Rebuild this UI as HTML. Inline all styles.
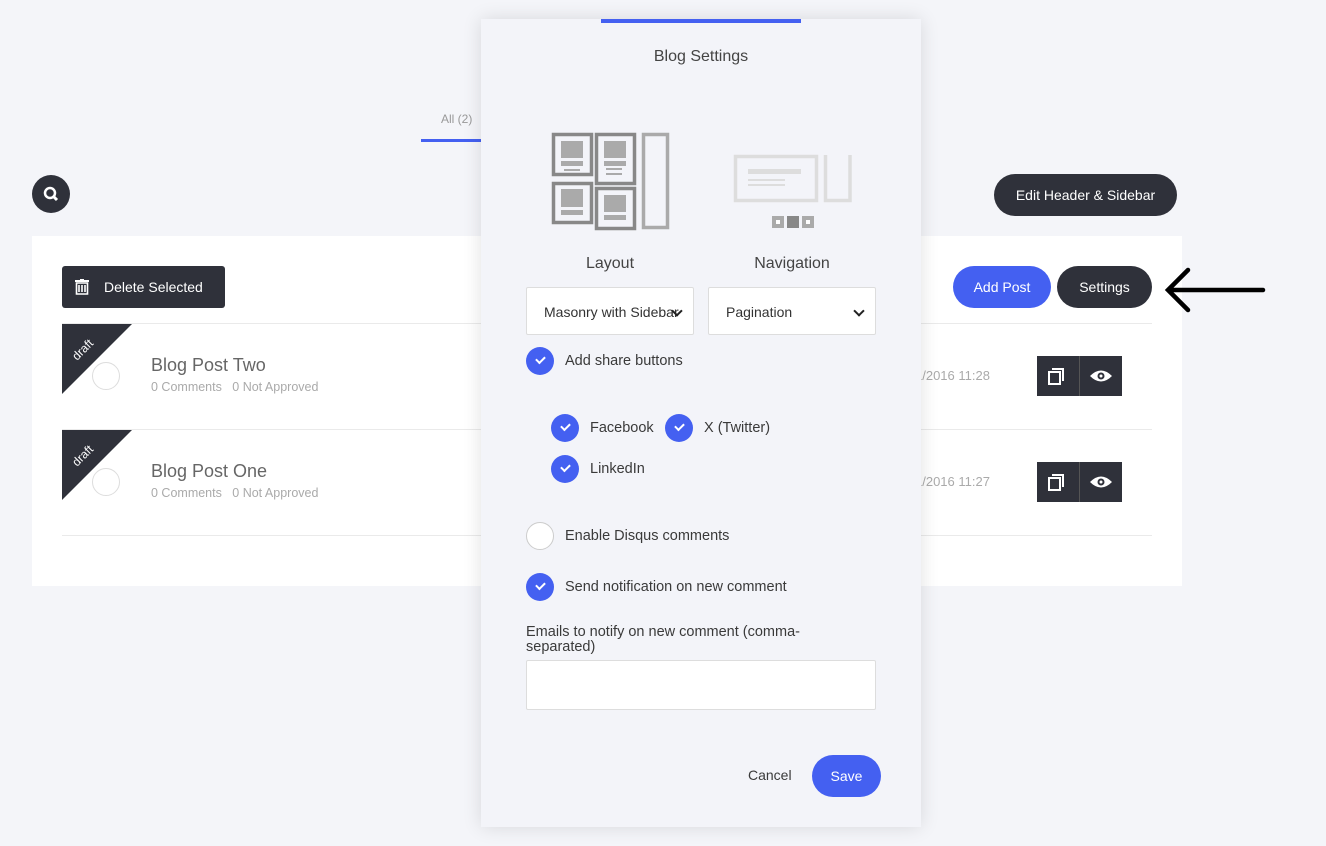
<!DOCTYPE html>
<html><head><meta charset="utf-8"><style>
*{box-sizing:border-box;margin:0;padding:0}
body{width:1326px;height:846px;background:#f4f5f9;font-family:"Liberation Sans",sans-serif;position:relative;overflow:hidden}
.a{position:absolute}
.dark{background:#2f313a;color:#fff}
.chk{position:absolute;width:28px;height:28px;border-radius:50%;background:#4460f1}
.chk:after{content:"";position:absolute;left:10px;top:9px;width:7px;height:4px;border-left:2px solid #fff;border-bottom:2px solid #fff;transform:rotate(-45deg)}
.lbl{position:absolute;font-size:15px;color:#3a3a3a}
.sel{position:absolute;height:48px;background:#fff;border:1px solid #ddd;border-radius:2px;font-size:14px;color:#333;padding:16px 0 0 17px;overflow:hidden;white-space:nowrap}
.sel:after{content:"";position:absolute;right:12px;top:19px;width:6px;height:6px;border-right:2px solid #222;border-bottom:2px solid #222;transform:rotate(45deg)}
</style></head><body>
<div class="a" style="left:441px;top:112px;font-size:12px;color:#999">All (2)</div>
<div class="a" style="left:421px;top:139px;width:62px;height:3px;background:#4460f1"></div>
<div class="a dark" style="left:32px;top:175px;width:38px;height:38px;border-radius:50%">
<svg width="38" height="38"><circle cx="18" cy="18" r="5" fill="none" stroke="#fff" stroke-width="2.5"/><line x1="21.5" y1="21.5" x2="25" y2="25" stroke="#fff" stroke-width="3"/></svg></div>
<div class="a dark" style="left:994px;top:174px;width:183px;height:42px;border-radius:21px;font-size:14px;text-align:center;line-height:42px">Edit Header &amp; Sidebar</div>
<div class="a" style="left:32px;top:236px;width:1150px;height:350px;background:#fff"></div>
<div class="a dark" style="left:62px;top:266px;width:163px;height:42px;border-radius:3px;font-size:14px;line-height:42px;padding-left:42px">Delete Selected
<svg class="a" style="left:13px;top:13px" width="14" height="16"><rect x="0" y="1" width="14" height="2" fill="#fff"/><rect x="5" y="0" width="4" height="2" fill="#fff"/><path d="M1.5 4h11v11h-11z M4 6v7 M7 6v7 M10 6v7" fill="none" stroke="#fff" stroke-width="1.6"/></svg></div>
<div class="a" style="left:953px;top:266px;width:98px;height:42px;border-radius:21px;background:#4460f1;color:#fff;font-size:14px;text-align:center;line-height:42px">Add Post</div>
<div class="a dark" style="left:1057px;top:266px;width:95px;height:42px;border-radius:21px;font-size:14px;text-align:center;line-height:42px">Settings</div>
<svg class="a" style="left:1160px;top:262px" width="110" height="56"><path d="M103 28H10 M28 8L8 28L28 48" fill="none" stroke="#000" stroke-width="4.5" stroke-linecap="round"/></svg>
<div class="a" style="left:62px;top:323px;width:1090px;height:1px;background:#eaeaea"></div>
<div class="a" style="left:62px;top:429px;width:1090px;height:1px;background:#eaeaea"></div>
<div class="a" style="left:62px;top:535px;width:1090px;height:1px;background:#eaeaea"></div>
<svg class="a" style="left:62px;top:324px" width="70" height="70"><path d="M0 0H70L0 70Z" fill="#2f313a"/><text x="0" y="0" transform="translate(15 37) rotate(-45)" fill="#fff" font-size="12" font-family="Liberation Sans">draft</text><circle cx="44" cy="52" r="13.5" fill="#fff" stroke="#ddd"/></svg>
<svg class="a" style="left:62px;top:430px" width="70" height="70"><path d="M0 0H70L0 70Z" fill="#2f313a"/><text x="0" y="0" transform="translate(15 37) rotate(-45)" fill="#fff" font-size="12" font-family="Liberation Sans">draft</text><circle cx="44" cy="52" r="13.5" fill="#fff" stroke="#ddd"/></svg>
<div class="a" style="left:151px;top:355px;font-size:18px;color:#666">Blog Post Two</div>
<div class="a" style="left:151px;top:380px;font-size:12.5px;color:#aaa">0 Comments &nbsp; 0 Not Approved</div>
<div class="a" style="left:151px;top:461px;font-size:18px;color:#666">Blog Post One</div>
<div class="a" style="left:151px;top:486px;font-size:12.5px;color:#aaa">0 Comments &nbsp; 0 Not Approved</div>
<div class="a" style="left:915px;top:368px;font-size:13px;color:#aaa">1/2016 11:28</div>
<div class="a" style="left:915px;top:474px;font-size:13px;color:#aaa">1/2016 11:27</div>
<div class="a dark" style="left:1037px;top:356px;width:85px;height:40px"><svg width="85" height="40"><path d="M12 16h11v12h-11z M15 13h11v12" fill="none" stroke="#fff" stroke-width="2"/><line x1="42.5" y1="0" x2="42.5" y2="40" stroke="#555"/><path d="M53 20q11-11 22 0q-11 11-22 0z" fill="#fff"/><circle cx="64" cy="20" r="3.5" fill="#2f313a"/><circle cx="64" cy="20" r="1.5" fill="#fff"/></svg></div>
<div class="a dark" style="left:1037px;top:462px;width:85px;height:40px"><svg width="85" height="40"><path d="M12 16h11v12h-11z M15 13h11v12" fill="none" stroke="#fff" stroke-width="2"/><line x1="42.5" y1="0" x2="42.5" y2="40" stroke="#555"/><path d="M53 20q11-11 22 0q-11 11-22 0z" fill="#fff"/><circle cx="64" cy="20" r="3.5" fill="#2f313a"/><circle cx="64" cy="20" r="1.5" fill="#fff"/></svg></div>
<div class="a" style="left:481px;top:19px;width:440px;height:808px;background:#f3f4f9;box-shadow:0 0 18px rgba(0,0,0,.12)"></div>
<div class="a" style="left:601px;top:19px;width:200px;height:4px;background:#4460f1"></div>
<div class="a" style="left:481px;top:48px;width:440px;text-align:center;font-size:16px;color:#444">Blog Settings</div>
<svg class="a" style="left:540px;top:125px" width="330" height="110" fill="none">
<g stroke="#888" stroke-width="3.5"><rect x="13.5" y="9.5" width="38" height="40"/><rect x="56.5" y="9.5" width="38" height="49"/><rect x="13.5" y="58.5" width="38" height="39"/><rect x="56.5" y="63.5" width="38" height="40"/></g>
<rect x="103.5" y="9.5" width="24" height="93" stroke="#aaa" stroke-width="3.5"/>
<g fill="#aaa"><rect x="21" y="16" width="22" height="17"/><rect x="21" y="36" width="22" height="5"/><rect x="24" y="44" width="16" height="2"/><rect x="64" y="16" width="22" height="17"/><rect x="64" y="36" width="22" height="5"/><rect x="66" y="43" width="16" height="2"/><rect x="66" y="48" width="16" height="2"/><rect x="21" y="64" width="22" height="18"/><rect x="21" y="85" width="22" height="5"/><rect x="64" y="70" width="22" height="17"/><rect x="64" y="90" width="22" height="5"/></g>
<rect x="195.5" y="31.5" width="81" height="44" stroke="#ddd" stroke-width="3.5"/>
<path d="M285.5 30v45.5h24.5V30" stroke="#ddd" stroke-width="3.5"/>
<g fill="#ddd"><rect x="208" y="44" width="53" height="5"/><rect x="208" y="54" width="37" height="2"/><rect x="208" y="59" width="37" height="2"/></g>
<rect x="232" y="91" width="12" height="12" fill="#aaa"/><rect x="236" y="95" width="4" height="4" fill="#fff"/>
<rect x="247" y="91" width="12" height="12" fill="#888"/>
<rect x="262" y="91" width="12" height="12" fill="#aaa"/><rect x="266" y="95" width="4" height="4" fill="#fff"/>
</svg>
<div class="a" style="left:526px;top:255px;width:168px;text-align:center;font-size:16px;color:#444">Layout</div>
<div class="a" style="left:708px;top:255px;width:168px;text-align:center;font-size:16px;color:#444">Navigation</div>
<div class="sel" style="left:526px;top:287px;width:168px">Masonry with Sidebar</div>
<div class="sel" style="left:708px;top:287px;width:168px">Pagination</div>
<div class="chk" style="left:526px;top:347px"></div><div class="lbl" style="left:565px;top:353px;font-size:14.5px">Add share buttons</div>
<div class="chk" style="left:551px;top:414px"></div><div class="lbl" style="left:590px;top:420px;font-size:14.5px">Facebook</div>
<div class="chk" style="left:665px;top:414px"></div><div class="lbl" style="left:704px;top:420px;font-size:14.5px">X (Twitter)</div>
<div class="chk" style="left:551px;top:455px"></div><div class="lbl" style="left:590px;top:461px;font-size:14.5px">LinkedIn</div>
<div class="a" style="left:526px;top:522px;width:28px;height:28px;border-radius:50%;background:#fff;border:1px solid #ccc"></div><div class="lbl" style="left:565px;top:528px;font-size:14.5px">Enable Disqus comments</div>
<div class="chk" style="left:526px;top:573px"></div><div class="lbl" style="left:565px;top:579px;font-size:14.5px">Send notification on new comment</div>
<div class="lbl" style="left:526px;top:625px;width:320px;font-size:14.5px;line-height:15px">Emails to notify on new comment (comma-separated)</div>
<div class="a" style="left:526px;top:660px;width:350px;height:50px;background:#fff;border:1px solid #ddd;border-radius:2px"></div>
<div class="lbl" style="left:748px;top:767px;font-size:14px">Cancel</div>
<div class="a" style="left:812px;top:755px;width:69px;height:42px;border-radius:21px;background:#4460f1;color:#fff;font-size:14px;text-align:center;line-height:42px">Save</div>
</body></html>
